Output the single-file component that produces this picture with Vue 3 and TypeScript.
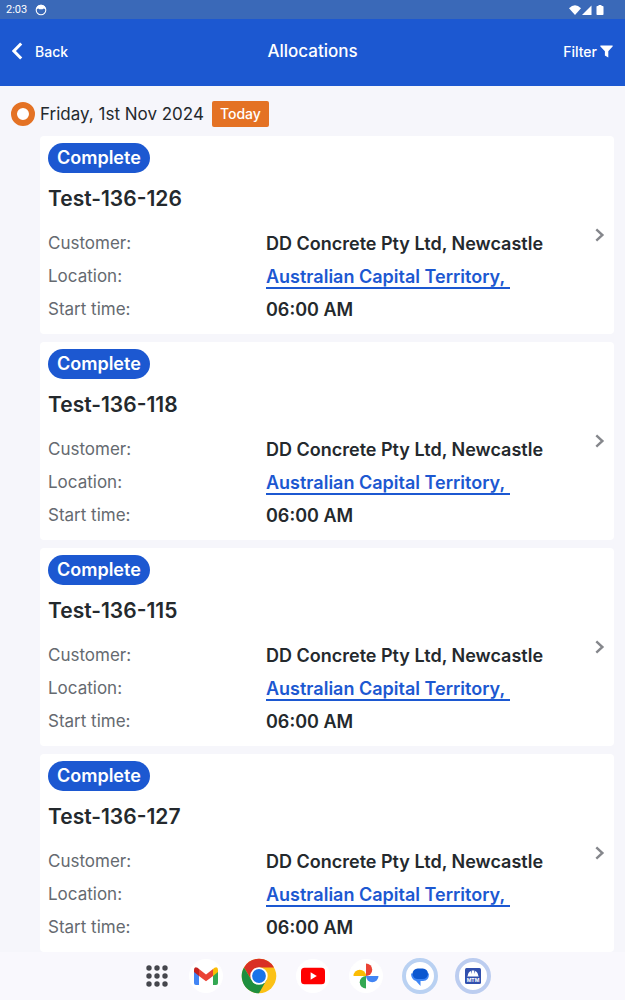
<script setup lang="ts">
interface Allocation {
  id: string
  status: string
  customer: string
  location: string
  start: string
}

const allocations: Allocation[] = ['126', '118', '115', '127'].map((suffix) => ({
  id: `Test-136-${suffix}`,
  status: 'Complete',
  customer: 'DD Concrete Pty Ltd, Newcastle',
  location: 'Australian Capital Territory,\u00a0',
  start: '06:00 AM',
}))

const dots: number[] = [3, 11, 19]
</script>

<template>
  <div class="screen">
    <div class="status-bar">
      <span>2:03</span>
      <svg class="status-face" width="12" height="12" viewBox="0 0 12 12" aria-hidden="true">
        <circle cx="6" cy="6" r="4.8" fill="none" stroke="#fff" stroke-width="1.1" />
        <path d="M1.400 5.200C1.600 2 3.500.800 6 .800s4.400 1.200 4.600 4.400L8.800 4.400l-1.300.8h-3l-1.300-.8z" fill="#fff" />
      </svg>
      <svg class="status-signals" width="36" height="12" viewBox="0 0 36 12" aria-hidden="true">
        <path d="M0 4.200Q6-1.600 12 4.200L6 11z" fill="#fff" />
        <path d="M13 11 22.500 1.500V11z" fill="#fff" />
        <path d="M29.500 1h3v1h1.200q.8 0 .8.800v7.400q0 .8-.8.8h-5.400q-.8 0-.8-.8V2.800q0-.8.8-.8h1.200z" fill="#fff" />
      </svg>
    </div>

    <header class="app-bar">
      <button class="bar-button back" type="button">
        <svg width="12" height="18" viewBox="0 0 12 18" aria-hidden="true">
          <path d="M9.200 1.500 1.900 9l7.300 7.500" fill="none" stroke="#fff" stroke-width="3" />
        </svg>
        Back
      </button>
      <h1>Allocations</h1>
      <button class="bar-button filter" type="button">
        Filter
        <svg width="13" height="13" viewBox="0 0 13 13" aria-hidden="true">
          <path d="M.6.400h11.800q.7.300.2 1L8.300 6.200v6.200L4.900 10.600V6.200L.4 1.400q-.4-.7.200-1z" fill="#fff" />
        </svg>
      </button>
    </header>

    <main class="content">
      <div class="day">
        <span class="marker"></span>
        <h2>Friday, 1st Nov 2024</h2>
        <span class="today">Today</span>
      </div>

      <article v-for="item in allocations" :key="item.id" class="card">
        <div class="card-body">
          <span class="badge">{{ item.status }}</span>
          <h3>{{ item.id }}</h3>
          <dl>
            <dt>Customer:</dt>
            <dd>{{ item.customer }}</dd>
            <dt>Location:</dt>
            <dd><a href="#">{{ item.location }}</a></dd>
            <dt>Start time:</dt>
            <dd>{{ item.start }}</dd>
          </dl>
        </div>
        <button class="open" type="button" :aria-label="`Open ${item.id}`">
          <svg width="10" height="14" viewBox="0 0 10 14" aria-hidden="true">
            <path d="M1.300 1.300 7.400 7l-6.100 5.700" fill="none" stroke="#85878c" stroke-width="2.400" />
          </svg>
        </button>
      </article>
    </main>

    <footer class="dock">
      <button class="dock-item apps" type="button" aria-label="All apps">
        <svg width="22" height="22" viewBox="0 0 22 22" aria-hidden="true">
          <template v-for="y in dots" :key="y">
            <circle v-for="x in dots" :key="x" :cx="x" :cy="y" r="2.700" fill="#45464d" />
          </template>
        </svg>
      </button>
      <nav class="dock-apps">
        <button class="dock-item" type="button" aria-label="Gmail">
          <svg width="36" height="36" viewBox="0 0 36 36">
            <circle cx="18" cy="18" r="17" fill="#fff" />
            <path d="M6 13v12q0 2 2 2h3V16z" fill="#4285f4" />
            <path d="M25 16v11h3q2 0 2-2V13z" fill="#34a853" />
            <path d="m25 11 1.500-1.300Q30 8 30 12v2l-5 4z" fill="#fbbc04" />
            <path d="M11 11 9.500 9.700Q6 8 6 12v2l5 4z" fill="#c5221f" />
            <path d="m11 11 7 5.500 7-5.500v7l-7 5.300-7-5.300z" fill="#ea4335" />
          </svg>
        </button>
        <button class="dock-item" type="button" aria-label="Chrome">
          <svg width="36" height="36" viewBox="0 0 36 36">
            <circle cx="18" cy="18" r="17.300" fill="#fbc116" />
            <path d="M3 9.400A17.300 17.300 0 0 1 33 9.400H18L10.500 22z" fill="#d93025" />
            <path d="M3 9.400A17.300 17.300 0 0 0 18 35.300L25.500 22H10.500z" fill="#1e8e3e" />
            <circle cx="18" cy="18" r="8.700" fill="#fff" />
            <circle cx="18" cy="18" r="6.900" fill="#1a73e8" />
          </svg>
        </button>
        <button class="dock-item" type="button" aria-label="YouTube">
          <svg width="36" height="36" viewBox="0 0 36 36">
            <circle cx="18" cy="18" r="17" fill="#fff" />
            <rect x="6" y="9.700" width="24" height="16.600" rx="3.500" fill="#f00" />
            <path d="m15.600 14.300 6.200 3.700-6.200 3.700z" fill="#fff" />
          </svg>
        </button>
        <button class="dock-item" type="button" aria-label="Photos">
          <svg width="36" height="36" viewBox="0 0 36 36">
            <circle cx="18" cy="18" r="17" fill="#fff" />
            <path d="M18 5.500a6.200 6.200 0 0 1 0 12.500z" fill="#ea4335" />
            <path d="M30.500 18a6.200 6.200 0 0 1-12.500 0z" fill="#4285f4" />
            <path d="M18 30.500a6.200 6.200 0 0 1 0-12.500z" fill="#34a853" />
            <path d="M5.500 18a6.200 6.200 0 0 1 12.500 0z" fill="#fbbc04" />
          </svg>
        </button>
        <button class="dock-item" type="button" aria-label="Messages">
          <svg width="36" height="36" viewBox="0 0 36 36">
            <circle cx="18" cy="18" r="16" fill="#fff" stroke="#b9d1f2" stroke-width="4" />
            <path d="M9 15.500h18q0 7.500-6 7.500h-2.500v5L14 23Q9 21.500 9 15.500z" fill="#3f86f5" />
            <rect x="10.500" y="10.500" width="15.500" height="10.500" rx="5.200" fill="#0b57d0" />
          </svg>
        </button>
        <button class="dock-item" type="button" aria-label="MTM">
          <svg width="36" height="36" viewBox="0 0 36 36">
            <circle cx="18" cy="18" r="16" fill="#fff" stroke="#bccdf0" stroke-width="4" />
            <rect x="10" y="10" width="16" height="16" rx="1.500" fill="#3150ae" />
            <path d="M12.800 17.500q.3-3.600 3-4.600l.9 3v-3.500h2.600v3.500l.9-3q2.700 1 3 4.600l.6.900H12.200z" fill="#fff" />
            <text x="18" y="24" text-anchor="middle" class="app-mark">MTM</text>
          </svg>
        </button>
      </nav>
    </footer>
  </div>
</template>

<style>
body {
  background: #f6f6fb;
}
</style>

<style scoped>
.screen {
  display: flex;
  flex-direction: column;
  height: 100vh;
  overflow: hidden;
  background: #f6f6fb;
  color: #24292d;
  font-family: Inter, "Liberation Sans", sans-serif;
}

button {
  padding: 0;
  border: 0;
  background: none;
  color: inherit;
  font: inherit;
  cursor: pointer;
}

svg {
  display: block;
}

h1,
h2,
h3,
dl,
dd {
  margin: 0;
}

.status-bar {
  flex: none;
  display: flex;
  align-items: center;
  gap: 8px;
  height: 19px;
  padding: 0 20px 0 6px;
  background: #3a69b8;
  color: #fff;
  font-family: Roboto, sans-serif;
  font-size: 11px;
}

.status-signals {
  margin-left: auto;
}

.app-bar {
  flex: none;
  display: grid;
  grid-template-columns: 1fr auto 1fr;
  align-items: center;
  height: 64px;
  padding: 0 12px 3px;
  background: #1c58d1;
  color: #fff;
}

.app-bar h1 {
  font-size: 17px;
  font-weight: 500;
}

.bar-button {
  display: flex;
  align-items: center;
  font-size: 14px;
  font-weight: 500;
}

.back {
  gap: 11px;
  justify-self: start;
}

.filter {
  gap: 3px;
  justify-self: end;
}

.content {
  flex: 1;
  min-height: 0;
  overflow: hidden;
  padding: 0 11px;
}

.day {
  display: flex;
  align-items: center;
  height: 50px;
  padding-top: 5px;
  box-sizing: border-box;
}

.marker {
  box-sizing: border-box;
  width: 24px;
  height: 24px;
  border: 6px solid #e47224;
  border-radius: 50%;
  background: #fff;
}

.day h2 {
  margin: 0 8px 0 5px;
  font-size: 17px;
  font-weight: 400;
}

.today {
  padding: 0 8px;
  border-radius: 2px;
  background: #e47224;
  color: #fff;
  font-size: 14px;
  font-weight: 500;
  line-height: 26px;
}

.card {
  display: flex;
  align-items: center;
  margin: 0 0 8px 29px;
  padding: 7px 8px 8px;
  border-radius: 4px;
  background: #fff;
}

.card-body {
  flex: 1;
}

.badge {
  display: block;
  width: fit-content;
  padding: 0 9px;
  border-radius: 15px;
  background: #1c58d1;
  color: #fff;
  font-size: 18px;
  font-weight: 600;
  line-height: 30px;
}

.card h3 {
  margin: 12px 0 14px;
  font-size: 21px;
  font-weight: 600;
  line-height: 28px;
}

.card dl {
  display: grid;
  grid-template-columns: 2fr 3fr;
  font-size: 17px;
  line-height: 33px;
}

.card dt {
  color: #656a70;
}

.card dd {
  font-size: 18px;
  font-weight: 600;
}

.card a {
  border-bottom: 2px solid #1c58d1;
  color: #1c58d1;
  text-decoration: none;
}

.open {
  margin: 0 1px 0 2px;
}

.dock {
  flex: none;
  display: flex;
  align-items: center;
  justify-content: center;
  gap: 20px;
  height: 48px;
  padding-left: 12px;
  background: #f9f8fd;
}

.dock-apps {
  display: flex;
  justify-content: space-between;
  width: 303px;
}

.app-mark {
  fill: #fff;
  font-family: Inter, sans-serif;
  font-size: 5px;
  font-weight: 700;
}
</style>
